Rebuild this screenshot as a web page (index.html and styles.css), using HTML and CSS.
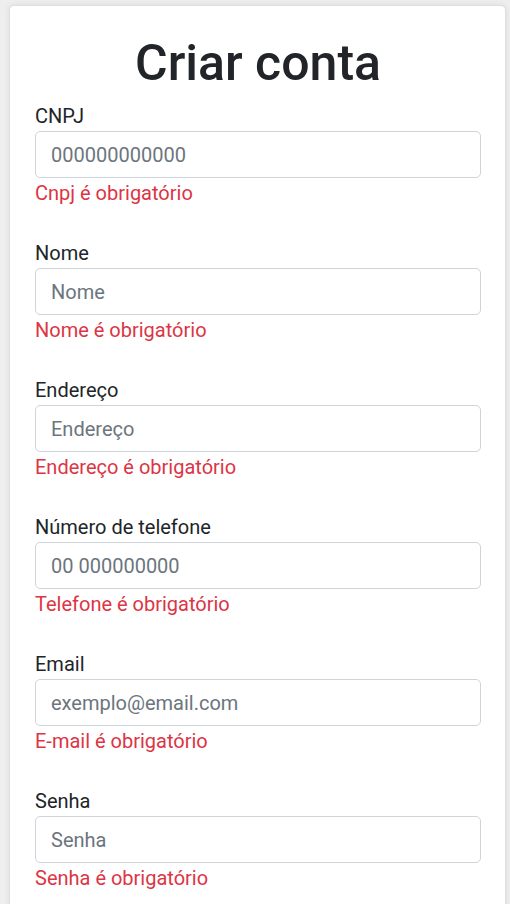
FILE: index.html
```html
<!DOCTYPE html>
<html lang="pt-BR">
<head>
<meta charset="utf-8">
<title>Criar conta</title>
<link rel="stylesheet" href="styles.css">
</head>
<body>
<main class="card">
  <h1 class="title">Criar conta</h1>
  <form class="form">
    <div class="field">
      <label class="label" for="cnpj">CNPJ</label>
      <input class="input" id="cnpj" placeholder="000000000000">
      <div class="error">Cnpj é obrigatório</div>
    </div>
    <div class="field">
      <label class="label" for="nome">Nome</label>
      <input class="input" id="nome" placeholder="Nome">
      <div class="error">Nome é obrigatório</div>
    </div>
    <div class="field">
      <label class="label" for="end">Endereço</label>
      <input class="input" id="end" placeholder="Endereço">
      <div class="error">Endereço é obrigatório</div>
    </div>
    <div class="field">
      <label class="label" for="tel">Número de telefone</label>
      <input class="input" id="tel" placeholder="00 000000000">
      <div class="error">Telefone é obrigatório</div>
    </div>
    <div class="field">
      <label class="label" for="email">Email</label>
      <input class="input" id="email" placeholder="exemplo@email.com">
      <div class="error">E-mail é obrigatório</div>
    </div>
    <div class="field">
      <label class="label" for="senha">Senha</label>
      <input class="input" id="senha" type="password" placeholder="Senha">
      <div class="error">Senha é obrigatório</div>
    </div>
  </form>
</main>
</body>
</html>
```

FILE: styles.css
```css
* { box-sizing: border-box; }
html, body { margin: 0; }
body {
  background: #eeeeee;
  font-family: Roboto, "Liberation Sans", sans-serif;
  color: #212529;
  padding: 5px 4px 0 9px;
  overflow: hidden;
}
.card {
  background: #fff;
  border: 1px solid #dcdfe3;
  border-radius: 5px;
  box-shadow: 0 0 6px rgba(0,0,0,0.08);
  padding: 27px 24px 40px 25px;
  min-height: 1000px;
}
.title {
  margin: 0 0 6px;
  text-align: center;
  font-size: 50px;
  font-weight: 500;
  line-height: 60px;
}
.form { display: flex; flex-direction: column; gap: 28px; }
.field { display: flex; flex-direction: column; }
.label {
  font-size: 20px;
  line-height: 30px;
  padding-top: 2px;
}
.input {
  height: 47px;
  border: 1px solid #ced4da;
  border-radius: 5px;
  padding: 0 15px;
  font-family: inherit;
  font-size: 20px;
  color: #495057;
  outline: none;
}
.input::placeholder { color: #6c757d; }
.error {
  color: #dc3545;
  font-size: 20px;
  line-height: 30px;
}
```
